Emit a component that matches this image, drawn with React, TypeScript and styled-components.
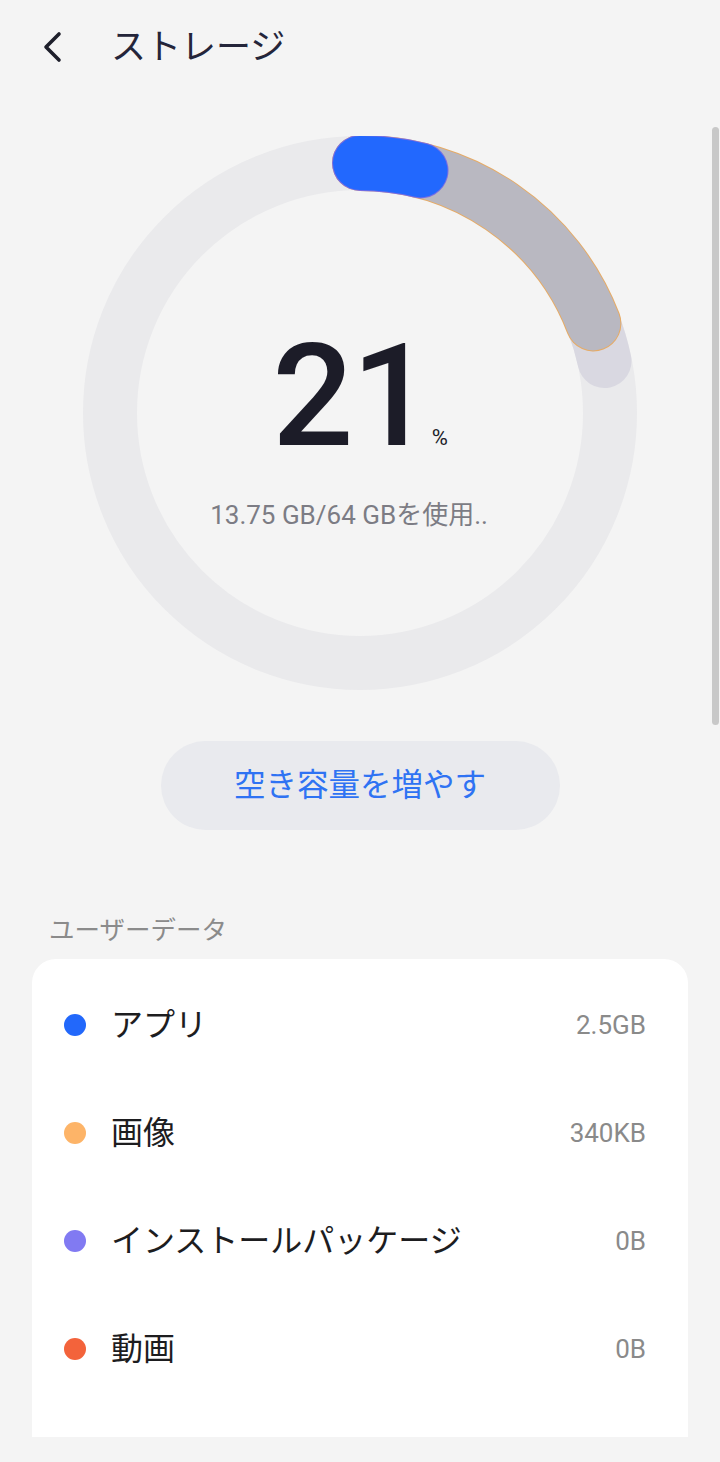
import React from 'react';
import styled, { createGlobalStyle } from 'styled-components';

const GlobalStyle = createGlobalStyle`
  html, body {
    margin: 0;
    padding: 0;
    background: #f4f4f4;
  }
  * {
    box-sizing: border-box;
  }
`;

const FONT = `Roboto, "Noto Sans CJK JP", sans-serif`;

type UsageItem = {
  label: string;
  value: string;
  color: string;
};

const ITEMS: UsageItem[] = [
  { label: 'アプリ', value: '2.5GB', color: '#2268fb' },
  { label: '画像', value: '340KB', color: '#fdb468' },
  { label: 'インストールパッケージ', value: '0B', color: '#817af2' },
  { label: '動画', value: '0B', color: '#f3633b' },
];

// point on the ring, angle in degrees clockwise from the top
const R = 250;
const C = 277;
const arcPath = (deg: number) => {
  const rad = (deg * Math.PI) / 180;
  const x = C + R * Math.sin(rad);
  const y = C - R * Math.cos(rad);
  return `M ${C} ${C - R} A ${R} ${R} 0 0 1 ${x.toFixed(1)} ${y.toFixed(1)}`;
};

const StorageRing = () => (
  <svg width="554" height="554" viewBox="0 0 554 554">
    <circle cx={C} cy={C} r={R} fill="none" stroke="#eaeaec" strokeWidth="54" />
    <path d={arcPath(78)} fill="none" stroke="#d9d8e1" strokeWidth="54" strokeLinecap="round" />
    <path d={arcPath(69)} fill="none" stroke="#e6ab66" strokeWidth="56" strokeLinecap="round" />
    <path d={arcPath(69)} fill="none" stroke="#b9b8c1" strokeWidth="54" strokeLinecap="round" />
    <path d={arcPath(14)} fill="none" stroke="#7a6ee2" strokeWidth="56" strokeLinecap="round" />
    <path d={arcPath(14)} fill="none" stroke="#2268fe" strokeWidth="54" strokeLinecap="round" />
  </svg>
);

const App = () => {
  return (
    <Page>
      <GlobalStyle />
      <Header>
        <BackButton>
          <svg width="22" height="32" viewBox="0 0 22 32">
            <path
              d="M17 3 L4 16 L17 29"
              fill="none"
              stroke="#1e1f2b"
              strokeWidth="3.6"
              strokeLinecap="round"
              strokeLinejoin="round"
            />
          </svg>
        </BackButton>
        <Title>ストレージ</Title>
      </Header>

      <RingWrapper>
        <StorageRing />
        <RingCenter>
          <PercentRow>
            <BigNumber>21</BigNumber>
            <PercentSign>%</PercentSign>
          </PercentRow>
          <UsageText>13.75 GB/64 GBを使用..</UsageText>
        </RingCenter>
      </RingWrapper>

      <FreeButton>空き容量を増やす</FreeButton>

      <SectionLabel>ユーザーデータ</SectionLabel>
      <Card>
        {ITEMS.map((item) => (
          <Row key={item.label}>
            <Dot color={item.color} />
            <RowLabel>{item.label}</RowLabel>
            <RowValue>{item.value}</RowValue>
          </Row>
        ))}
      </Card>

      <ScrollBar />
    </Page>
  );
};

export default App;

const Page = styled.div`
  position: relative;
  width: 720px;
  height: 1462px;
  overflow: hidden;
  display: flex;
  flex-direction: column;
  align-items: center;
  background: #f4f4f4;
  font-family: ${FONT};
`;

const Header = styled.div`
  width: 100%;
  height: 94px;
  display: flex;
  align-items: center;
  padding-left: 42px;
  gap: 47px;
`;

const BackButton = styled.div`
  display: flex;
  align-items: center;
  width: 22px;
  height: 32px;
`;

const Title = styled.span`
  font-size: 35px;
  color: #24253a;
  line-height: 1;
`;

const RingWrapper = styled.div`
  position: relative;
  width: 554px;
  height: 554px;
  margin-top: 42px;
`;

const RingCenter = styled.div`
  position: absolute;
  inset: 0;
  display: flex;
  flex-direction: column;
  align-items: center;
  padding-top: 189px;
`;

const PercentRow = styled.div`
  display: flex;
  align-items: baseline;
  gap: 1px;
`;

const BigNumber = styled.span`
  font-family: Roboto, sans-serif;
  font-size: 143px;
  font-weight: 500;
  line-height: 1;
  color: #1c1c28;
  letter-spacing: -2px;
`;

const PercentSign = styled.span`
  font-family: Roboto, sans-serif;
  font-size: 22px;
  line-height: 1;
  color: #1c1c28;
`;

const UsageText = styled.div`
  margin-top: 32px;
  margin-right: 22px;
  font-size: 26px;
  line-height: 30px;
  color: #7c7c84;
`;

const FreeButton = styled.button`
  width: 399px;
  height: 89px;
  margin-top: 51px;
  border: none;
  border-radius: 45px;
  background: #e9eaee;
  color: #2f73f3;
  font-family: ${FONT};
  font-size: 31.5px;
  line-height: 1;
  padding: 0;
`;

const SectionLabel = styled.div`
  align-self: stretch;
  margin-top: 86px;
  margin-bottom: 15px;
  padding-left: 49px;
  font-size: 25.5px;
  line-height: 28px;
  color: #8b8b8b;
`;

const Card = styled.div`
  width: 656px;
  background: #ffffff;
  border-radius: 24px 24px 0 0;
  padding: 12px 42px 34px 32px;
  display: flex;
  flex-direction: column;
`;

const Row = styled.div`
  height: 108px;
  display: flex;
  align-items: center;
`;

const Dot = styled.span<{ color: string }>`
  width: 22px;
  height: 22px;
  border-radius: 50%;
  background: ${({ color }) => color};
  flex-shrink: 0;
`;

const RowLabel = styled.span`
  margin-left: 25px;
  flex: 1;
  font-size: 32px;
  line-height: 1;
  color: #1d1d1f;
`;

const RowValue = styled.span`
  font-family: Roboto, sans-serif;
  font-size: 26px;
  line-height: 1;
  color: #8a8a8a;
`;

const ScrollBar = styled.div`
  position: absolute;
  right: 1px;
  top: 127px;
  width: 7px;
  height: 598px;
  border-radius: 4px;
  background: #c8c8c8;
`;
